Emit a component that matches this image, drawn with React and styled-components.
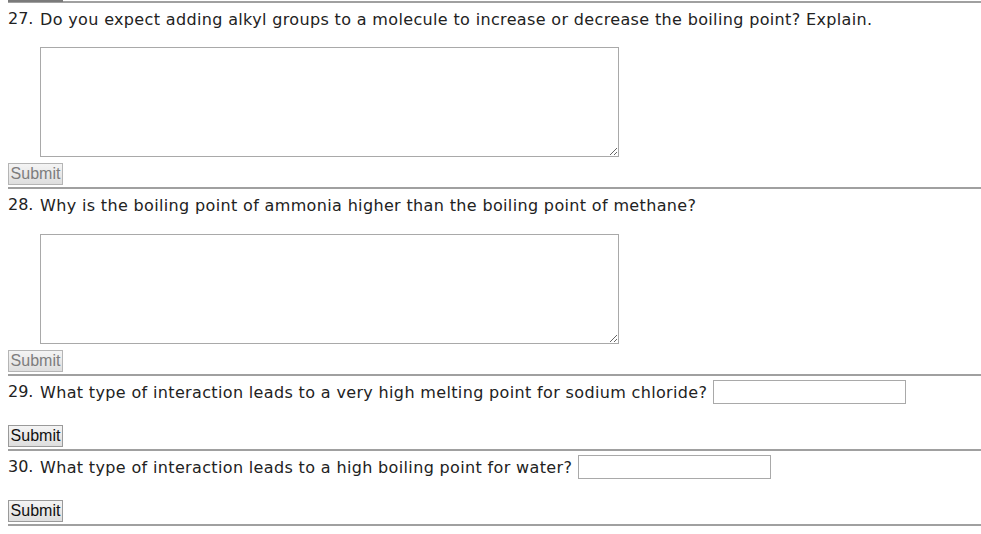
import React from "react";
import styled, { createGlobalStyle } from "styled-components";

const Global = createGlobalStyle`
  html, body { margin: 0; padding: 0; background: #fff; }
  body { padding: 0 0 0 8px; font-family: "DejaVu Sans", Verdana, sans-serif; color: #222; overflow: hidden; }
`;

const Page = styled.div`
  display: flex;
  flex-direction: column;
`;

const TopEdge = styled.div`
  height: 1px;
  border-bottom: 2px solid #a0a0a0;
  position: relative;
  &::before {
    content: "";
    position: absolute;
    left: 0;
    top: 0;
    width: 55px;
    height: 2px;
    background: #7a7a7a;
  }
`;

const Block = styled.section`
  display: flex;
  flex-direction: column;
  border-bottom: 2px solid #a0a0a0;
`;

const QRow = styled.div`
  display: flex;
  align-items: center;
  gap: 4px;
  height: 32px;
`;

const Num = styled.span`
  font-family: "DejaVu Sans", Verdana, sans-serif;
  font-size: 16px;
  width: 28px;
  color: #222;
  position: relative;
  top: -1px;
`;

const Text = styled.span`
  font-size: 16px;
  letter-spacing: 0.35px;
  color: #222;
  white-space: nowrap;
`;

const Area = styled.textarea`
  display: block;
  margin: ${(p) => p.$mt}px 0 0 32px;
  width: 579px;
  height: 110px;
  box-sizing: border-box;
  border: 1px solid #a9a9a9;
  background: #fff;
  padding: 2px;
  font-family: inherit;
`;

const Input = styled.input`
  width: 193px;
  height: 24px;
  box-sizing: border-box;
  border: 1px solid #a9a9a9;
  margin-left: 2px;
  padding: 2px;
`;

const Submit = styled.button`
  align-self: flex-start;
  margin-top: ${(p) => p.$mt}px;
  margin-bottom: 2px;
  width: 55px;
  height: 22px;
  padding: 0;
  font-family: "Liberation Sans", Arial, sans-serif;
  font-size: 16px;
  color: ${(p) => (p.disabled ? "#7d7d7d" : "#111")};
  border: 1px solid ${(p) => (p.disabled ? "#b5b5b5" : "#9a9a9a")};
  border-radius: 0;
  background: linear-gradient(#f4f4f4, #dedede);
  cursor: default;
`;

export default function App() {
  return (
    <Page>
      <Global />
      <TopEdge />
      <Block>
        <QRow>
          <Num>27.</Num>
          <Text>Do you expect adding alkyl groups to a molecule to increase or decrease the boiling point? Explain.</Text>
        </QRow>
        <Area $mt={12} />
        <Submit disabled $mt={6}>Submit</Submit>
      </Block>
      <Block>
        <QRow>
          <Num>28.</Num>
          <Text>Why is the boiling point of ammonia higher than the boiling point of methane?</Text>
        </QRow>
        <Area $mt={13} />
        <Submit disabled $mt={6}>Submit</Submit>
      </Block>
      <Block>
        <QRow>
          <Num>29.</Num>
          <Text>What type of interaction leads to a very high melting point for sodium chloride?</Text>
          <Input type="text" />
        </QRow>
        <Submit $mt={17}>Submit</Submit>
      </Block>
      <Block>
        <QRow>
          <Num>30.</Num>
          <Text>What type of interaction leads to a high boiling point for water?</Text>
          <Input type="text" />
        </QRow>
        <Submit $mt={17}>Submit</Submit>
      </Block>
    </Page>
  );
}
